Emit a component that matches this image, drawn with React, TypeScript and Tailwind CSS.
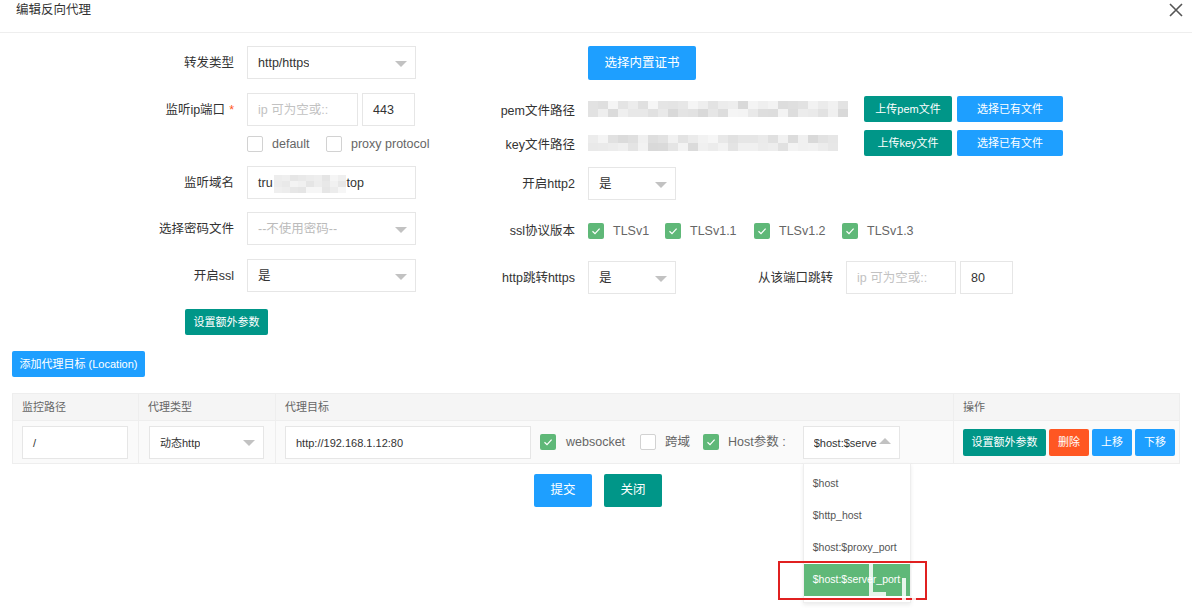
import type { ReactNode } from 'react';

const FONT = { fontFamily: '"Liberation Sans", "Noto Sans CJK SC", sans-serif' };

// blurred (pixelated) text stand-in
const Mosaic = ({ cols, rows, cell, seed, light }: { cols: number; rows: number; cell: number; seed: number; light?: boolean }) => {
  let s = seed;
  const next = () => {
    s = (s * 9301 + 49297) % 233280;
    return s / 233280;
  };
  const lo = light ? 0xe4 : 0xd8;
  const hi = 0xf7;
  return (
    <div className="flex flex-col">
      {Array.from({ length: rows }).map((_, r) => (
        <div key={r} className="flex">
          {Array.from({ length: cols }).map((_, c) => {
            const v = Math.round(lo + next() * (hi - lo));
            return <div key={c} style={{ width: cell, height: cell - 2, backgroundColor: `rgb(${v},${v},${v})` }} />;
          })}
        </div>
      ))}
    </div>
  );
};

const Arrow = ({ up }: { up?: boolean }) =>
  up ? (
    <span className="shrink-0 w-0 h-0 border-x-[6px] border-x-transparent border-b-[6px] border-b-[#c2c2c2] mb-[2px]" />
  ) : (
    <span className="shrink-0 w-0 h-0 border-x-[6px] border-x-transparent border-t-[6px] border-t-[#c2c2c2] mt-[2px]" />
  );

const Select = ({ value, placeholder, className, up, textClass = 'text-[12.5px]' }: { value?: string; placeholder?: string; className: string; up?: boolean; textClass?: string }) => (
  <div className={`h-[33px] border border-[#e6e6e6] bg-white flex items-center justify-between pl-[10px] pr-[8px] ${className}`}>
    <span className={`${textClass} pt-[2px] whitespace-nowrap overflow-hidden ${value ? 'text-[#333]' : 'text-[#bbb]'}`}>{value ?? placeholder}</span>
    <Arrow up={up} />
  </div>
);

const Input = ({ value, placeholder, className, textClass = 'text-[12.5px]' }: { value?: ReactNode; placeholder?: string; className: string; textClass?: string }) => (
  <div className={`h-[33px] border border-[#e6e6e6] bg-white flex items-center pl-[10px] ${className}`}>
    <span className={`${textClass} pt-[2px] whitespace-nowrap ${value ? 'text-[#333]' : 'text-[#c2c2c2]'}`}>{value ?? placeholder}</span>
  </div>
);

const Check = ({ on }: { on?: boolean }) =>
  on ? (
    <span className="w-4 h-4 shrink-0 rounded-[2px] bg-[#5FB878] flex items-center justify-center">
      <svg width="10" height="10" viewBox="0 0 10 10" fill="none" stroke="white" strokeWidth="1.2">
        <path d="M1.5 5.2 L4 7.6 L8.6 2.6" />
      </svg>
    </span>
  ) : (
    <span className="block w-4 h-4 shrink-0 rounded-[2px] border border-[#d2d2d2] bg-white" />
  );

const Btn = ({ children, color, className }: { children: ReactNode; color: string; className: string }) => (
  <div className={`flex items-center justify-center rounded-[2px] text-white whitespace-nowrap ${color} ${className}`}>{children}</div>
);

const TEAL = 'bg-[#009688]';
const BLUE = 'bg-[#1E9FFF]';

const LeftLabel = ({ children }: { children: ReactNode }) => (
  <div className="w-[234px] mr-[13px] pt-[2px] text-right text-[12.5px] text-[#333]">{children}</div>
);
const RightLabel = ({ children, w = 'w-[130px]' }: { children: ReactNode; w?: string }) => (
  <div className={`${w} mr-[13px] pt-[2px] text-right text-[12.5px] text-[#333] whitespace-nowrap`}>{children}</div>
);

export default function App() {
  return (
    <div className="relative w-[1192px] h-[609px] bg-white overflow-hidden" style={FONT}>
      {/* header */}
      <div className="h-[33px] border-b border-[#eee] flex items-start justify-between pl-[16px] pr-[8px]">
        <span className="text-[12.5px] text-[#333] leading-[20px]">编辑反向代理</span>
        <svg width="14" height="14" viewBox="0 0 14 14" className="mt-[3px] mr-[1px]" stroke="#555" strokeWidth="1.6">
          <path d="M1 1 L13 13 M13 1 L1 13" />
        </svg>
      </div>

      {/* form */}
      <div className="flex pt-[13px]">
        <div className="w-[445px] flex flex-col">
          <div className="h-[33px] flex items-center">
            <LeftLabel>转发类型</LeftLabel>
            <Select value="http/https" className="w-[169px]" />
          </div>
          <div className="h-[33px] mt-[14px] flex items-center">
            <LeftLabel>
              监听ip端口<span className="text-[#FF5722] ml-[4px]">*</span>
            </LeftLabel>
            <Input placeholder="ip 可为空或::" className="w-[111px]" />
            <Input value="443" className="w-[53px] ml-[4px]" />
          </div>
          <div className="h-[16px] mt-[10px] flex items-center pl-[247px] text-[12.5px] text-[#666]">
            <div className="w-[79px] flex items-center">
              <Check />
              <span className="ml-[9px]">default</span>
            </div>
            <div className="flex items-center">
              <Check />
              <span className="ml-[9px]">proxy protocol</span>
            </div>
          </div>
          <div className="h-[33px] mt-[14px] flex items-center">
            <LeftLabel>监听域名</LeftLabel>
            <Input
              className="w-[169px]"
              value={
                <span className="flex items-center">
                  tru
                  <span className="mx-[1px]">
                    <Mosaic cols={9} rows={3} cell={8} seed={7} light />
                  </span>
                  top
                </span>
              }
            />
          </div>
          <div className="h-[33px] mt-[13px] flex items-center">
            <LeftLabel>选择密码文件</LeftLabel>
            <Select placeholder="--不使用密码--" className="w-[169px]" />
          </div>
          <div className="h-[33px] mt-[14px] flex items-center">
            <LeftLabel>开启ssl</LeftLabel>
            <Select value="是" className="w-[169px]" />
          </div>
          <div className="mt-[17px] pl-[185px]">
            <Btn color={TEAL} className="w-[83px] h-[26px] text-[11px]">设置额外参数</Btn>
          </div>
        </div>

        <div className="flex-1 flex flex-col">
          <div className="pl-[143px]">
            <Btn color={BLUE} className="w-[108px] h-[34px] text-[12.5px]">选择内置证书</Btn>
          </div>
          <div className="h-[26px] mt-[16px] flex items-center">
            <RightLabel>
              <span className="relative top-[1px]">pem文件路径</span>
            </RightLabel>
            <div className="w-[276px]">
              <Mosaic cols={26} rows={2} cell={10} seed={3} />
            </div>
            <Btn color={TEAL} className="w-[88px] h-[26px] text-[11px]">上传pem文件</Btn>
            <Btn color={BLUE} className="w-[106px] h-[26px] text-[11px] ml-[5px]">选择已有文件</Btn>
          </div>
          <div className="h-[26px] mt-[8px] flex items-center">
            <RightLabel>
              <span className="relative top-[1px]">key文件路径</span>
            </RightLabel>
            <div className="w-[276px]">
              <Mosaic cols={25} rows={2} cell={10} seed={11} />
            </div>
            <Btn color={TEAL} className="w-[88px] h-[26px] text-[11px]">上传key文件</Btn>
            <Btn color={BLUE} className="w-[106px] h-[26px] text-[11px] ml-[5px]">选择已有文件</Btn>
          </div>
          <div className="h-[33px] mt-[11px] flex items-center">
            <RightLabel>开启http2</RightLabel>
            <Select value="是" className="w-[88px]" />
          </div>
          <div className="h-[33px] mt-[14px] flex items-center text-[12.5px] text-[#666]">
            <RightLabel>ssl协议版本</RightLabel>
            {[
              ['TLSv1', 'w-[77px]'],
              ['TLSv1.1', 'w-[89px]'],
              ['TLSv1.2', 'w-[88px]'],
              ['TLSv1.3', ''],
            ].map(([t, w]) => (
              <div key={t} className={`flex items-center ${w}`}>
                <Check on />
                <span className="ml-[9px] pt-[1px]">{t}</span>
              </div>
            ))}
          </div>
          <div className="h-[33px] mt-[14px] flex items-center">
            <RightLabel>http跳转https</RightLabel>
            <Select value="是" className="w-[88px]" />
            <RightLabel w="w-[157px]">从该端口跳转</RightLabel>
            <Input placeholder="ip 可为空或::" className="w-[110px]" />
            <Input value="80" className="w-[53px] ml-[4px]" />
          </div>
        </div>
      </div>

      {/* locations */}
      <div className="px-[12px] mt-[16px]">
        <Btn color={BLUE} className="w-[133px] h-[26px] text-[11px]">添加代理目标 (Location)</Btn>

        <div className="mt-[16px] border border-[#eee] text-[11px]">
          <div className="flex h-[27px] bg-[#f5f5f5] text-[#666] border-b border-[#eee]">
            <div className="w-[126px] pl-[9px] flex items-center border-r border-[#eee]">监控路径</div>
            <div className="w-[137px] pl-[9px] flex items-center border-r border-[#eee]">代理类型</div>
            <div className="w-[678px] pl-[9px] flex items-center border-r border-[#eee]">代理目标</div>
            <div className="flex-1 pl-[9px] flex items-center">操作</div>
          </div>
          <div className="flex h-[42px] bg-[#fafafa]">
            <div className="w-[126px] pl-[9px] flex items-center border-r border-[#eee]">
              <Input value="/" className="w-[106px]" textClass="text-[11px]" />
            </div>
            <div className="w-[137px] pl-[10px] flex items-center border-r border-[#eee]">
              <Select value="动态http" className="w-[115px]" textClass="text-[11px]" />
            </div>
            <div className="w-[678px] pl-[9px] flex items-center border-r border-[#eee] text-[12.5px] text-[#666]">
              <Input value="http://192.168.1.12:80" className="w-[246px]" textClass="text-[11px]" />
              <span className="ml-[9px]"><Check on /></span>
              <span className="ml-[10px]">websocket</span>
              <span className="ml-[15px]"><Check /></span>
              <span className="ml-[9px]">跨域</span>
              <span className="ml-[13px]"><Check on /></span>
              <span className="ml-[9px]">Host参数 :</span>
              <div className="relative ml-[17px]">
                <Select value="$host:$serve" up className="w-[97px]" textClass="text-[11px]" />
                <div className="absolute left-0 top-[37px] w-[108px] h-[140px] bg-white border border-[#eee] shadow-[0_2px_4px_rgba(0,0,0,0.08)] pt-[4px] text-[10.5px] text-[#555] z-10">
                  {['$host', '$http_host', '$host:$proxy_port'].map((o) => (
                    <div key={o} className="h-[32px] pl-[9px] flex items-center">{o}</div>
                  ))}
                  <div className="h-[32px] pl-[9px] flex items-center bg-[#5FB878] text-white">$host:$server_port</div>
                </div>
              </div>
            </div>
            <div className="flex-1 pl-[9px] flex items-center text-[11px]">
              <Btn color={TEAL} className="w-[83px] h-[27px]">设置额外参数</Btn>
              <Btn color="bg-[#FF5722]" className="w-[40px] h-[27px] ml-[3px]">删除</Btn>
              <Btn color={BLUE} className="w-[40px] h-[27px] ml-[3px]">上移</Btn>
              <Btn color={BLUE} className="w-[40px] h-[27px] ml-[3px]">下移</Btn>
            </div>
          </div>
        </div>

        <div className="mt-[10px] flex justify-center gap-[12px] pl-[4px]">
          <Btn color={BLUE} className="w-[58px] h-[33px] text-[12.5px]">提交</Btn>
          <Btn color={TEAL} className="w-[58px] h-[33px] text-[12.5px]">关闭</Btn>
        </div>
      </div>

      {/* annotation overlay */}
      <div className="absolute left-[778px] top-[561px] w-[149px] h-[39px] border-2 border-[#e02020] z-20" />
      <svg className="absolute left-[866px] top-[562px] z-30" width="56" height="40" viewBox="0 0 56 40" fill="none" stroke="rgba(255,255,255,0.85)" strokeWidth="4">
        <path d="M5 2 V32 H20" />
        <path d="M38 16 V38" />
        <path d="M48 6 V38" />
      </svg>
    </div>
  );
}
